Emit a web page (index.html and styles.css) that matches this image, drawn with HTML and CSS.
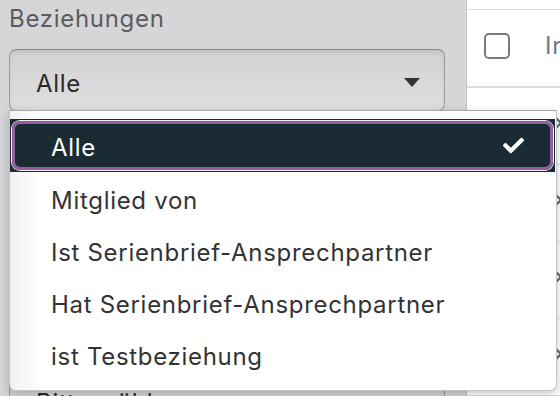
FILE: index.html
```html
<!DOCTYPE html>
<html lang="de">
<head>
<meta charset="utf-8">
<title>Beziehungen</title>
<link rel="stylesheet" href="styles.css">
</head>
<body>
<div class="app">
  <aside class="filters">
    <div class="field">
      <div class="label">Beziehungen</div>
      <div class="select"><span class="value">Alle</span><span class="caret"></span></div>
    </div>
    <div class="field field-next">
      <div class="label">Kategorie</div>
      <div class="select"><span class="value">Bitte wählen</span><span class="caret"></span></div>
    </div>
  </aside>
  <main class="list">
    <div class="list-head">
      <span class="checkbox"></span>
      <span class="col-title">Inhaber</span>
    </div>
    <div class="list-row"><svg class="chev" width="10" height="16" viewBox="0 0 10 16"><path d="M2 2l6 6-6 6" fill="none" stroke="#5d6674" stroke-width="2.2" stroke-linecap="round" stroke-linejoin="round"/></svg></div>
    <div class="list-row"><svg class="chev" width="10" height="16" viewBox="0 0 10 16"><path d="M2 2l6 6-6 6" fill="none" stroke="#5d6674" stroke-width="2.2" stroke-linecap="round" stroke-linejoin="round"/></svg></div>
    <div class="list-row"><svg class="chev" width="10" height="16" viewBox="0 0 10 16"><path d="M2 2l6 6-6 6" fill="none" stroke="#5d6674" stroke-width="2.2" stroke-linecap="round" stroke-linejoin="round"/></svg></div>
    <div class="list-row"><svg class="chev" width="10" height="16" viewBox="0 0 10 16"><path d="M2 2l6 6-6 6" fill="none" stroke="#5d6674" stroke-width="2.2" stroke-linecap="round" stroke-linejoin="round"/></svg></div>
  </main>
  <ul class="dropdown">
    <li class="opt-selected">
      <div class="opt-ring">
        <span>Alle</span>
        <svg class="check" width="21" height="21" viewBox="0 0 512 512"><path fill="#fff" d="M173.9 439.4l-166.4-166.4c-10-10-10-26.2 0-36.2l36.2-36.2c10-10 26.2-10 36.2 0L192 312.7 432.1 72.6c10-10 26.2-10 36.2 0l36.2 36.2c10 10 10 26.2 0 36.2l-294.4 294.4c-10 10-26.2 10-36.2 0z"/></svg>
      </div>
    </li>
    <li class="opt">Mitglied von</li>
    <li class="opt">Ist Serienbrief-Ansprechpartner</li>
    <li class="opt">Hat Serienbrief-Ansprechpartner</li>
    <li class="opt">ist Testbeziehung</li>
  </ul>
</div>
</body>
</html>
```

FILE: styles.css
```css
* { box-sizing: border-box; }

html, body {
  margin: 0;
  padding: 0;
}

body {
  width: 560px;
  height: 396px;
  overflow: hidden;
  font-family: Inter, "Noto Sans", "Liberation Sans", sans-serif;
  font-size: 24px;
  line-height: 28px;
  letter-spacing: 0.7px;
  color: #333;
  background: #fff;
}

.app {
  position: relative;
  display: flex;
  width: 560px;
  height: 396px;
  overflow: hidden;
}

/* left filter panel */
.filters {
  width: 467px;
  flex: none;
  background: #d6d6d9;
  border-right: 1px solid #c6c6ca;
  padding: 5px 21px 0 9px;
}

.label {
  color: #5c5c5e;
  height: 28px;
  white-space: nowrap;
}

.select {
  margin-top: 16px;
  height: 62px;
  display: flex;
  justify-content: space-between;
  align-items: flex-start;
  padding: 20px 24px 0 26px;
  border: 1px solid #9c9c9e;
  border-top-color: #8a8a8c;
  border-radius: 7px;
  background: linear-gradient(#d3d3d4, #dedee0);
  box-shadow: inset 0 3px 4px rgba(0, 0, 0, 0.08);
  color: #2b2b2b;
}

.caret {
  width: 0;
  height: 0;
  margin-top: 8px;
  border-left: 8px solid transparent;
  border-right: 8px solid transparent;
  border-top: 9px solid #333;
}

.field-next {
  margin-top: 213px;
}

/* right list */
.list {
  flex: 1;
  background: #fff;
  padding-top: 9px;
  overflow: hidden;
  white-space: nowrap;
}

.list-head {
  height: 79px;
  display: flex;
  align-items: flex-start;
  padding: 23px 0 0 17px;
  border-top: 1px solid #dedede;
  border-bottom: 2px solid #dedede;
}

.checkbox {
  width: 26px;
  height: 26px;
  flex: none;
  border: 2px solid #7a7a7c;
  border-radius: 5px;
  background: #fff;
}

.col-title {
  margin-left: 35px;
  margin-top: -1px;
  color: #6d7786;
}

.list-row {
  height: 77px;
  display: flex;
  align-items: center;
  padding: 0 0 6px 86px;
  border-bottom: 1px solid #dedede;
}

.chev { flex: none; }

/* dropdown menu overlay */
.dropdown {
  position: absolute;
  left: 9px;
  top: 110px;
  width: 548px;
  margin: 0;
  padding: 8px 0 10px;
  list-style: none;
  background: linear-gradient(to right, #f1f1f1, #fff 30px);
  border: 1px solid #c4c4c6;
  border-top-color: #a9a9ab;
  border-radius: 0 0 7px 7px;
  box-shadow: 0 3px 10px rgba(0, 0, 0, 0.22);
}

.opt {
  height: 52px;
  padding: 15px 0 0 41px;
  color: #333;
  white-space: nowrap;
}

.opt-selected {
  height: 53px;
  margin-right: 1px;
  padding: 2px;
  background: #1b2b33;
}

.opt-ring {
  height: 49px;
  display: flex;
  justify-content: space-between;
  align-items: flex-start;
  padding: 10px 26px 0 36px;
  border: 3px solid #965ea2;
  border-radius: 8px;
  box-shadow: 0 0 0 1px #f3eef4;
  color: #fff;
}

.check {
  flex: none;
  margin-top: 1px;
}
```
